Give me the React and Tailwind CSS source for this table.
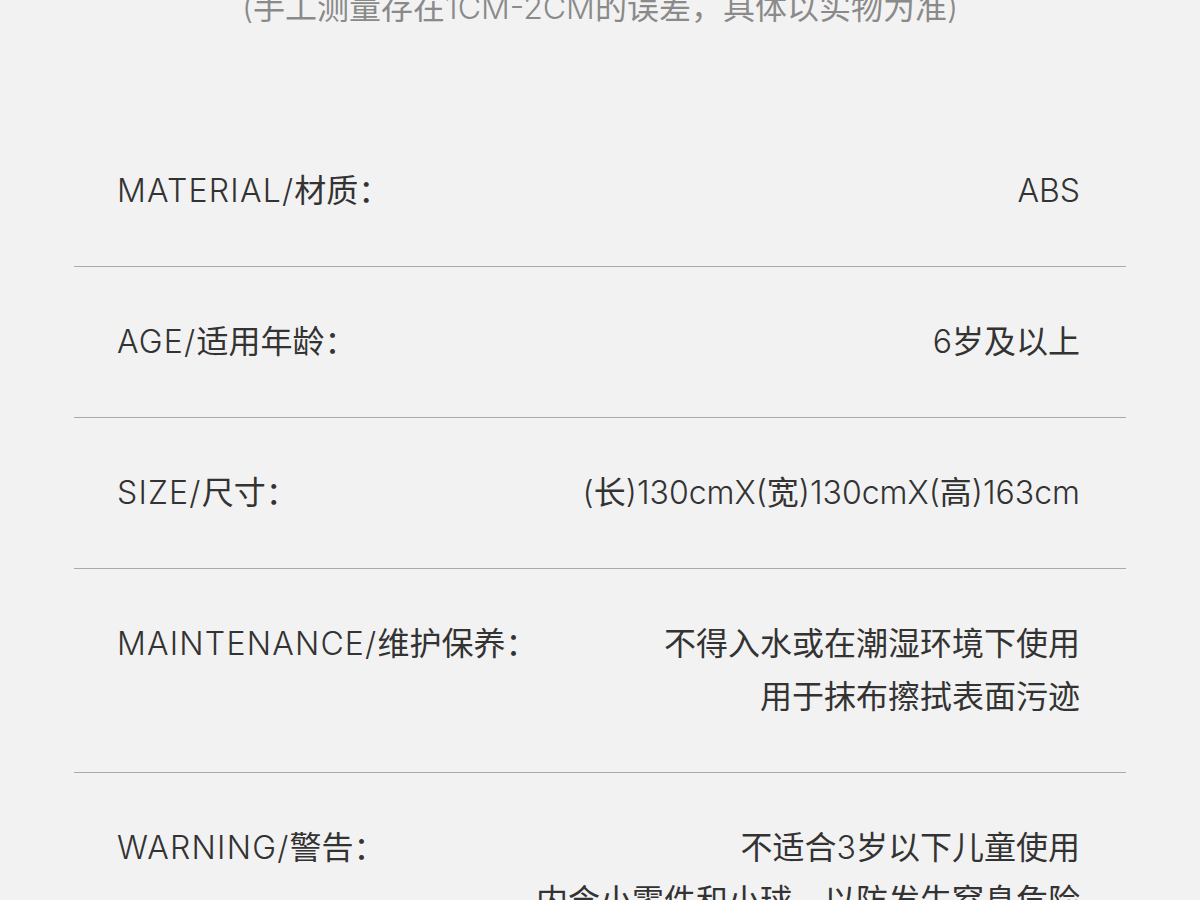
function Mixed({ text, latinClass }) {
  const parts = text.split(/([A-Za-z0-9()\/\-.]+)/).filter((p) => p !== "");
  return (
    <>
      {parts.map((p, i) =>
        /^[A-Za-z0-9()\/\-.]+$/.test(p) ? (
          <span key={i} className={latinClass}>
            {p}
          </span>
        ) : (
          <span key={i}>{p}</span>
        )
      )}
    </>
  );
}

export default function App() {
  const rows = [
    { label: "MATERIAL/材质：", value: ["ABS"] },
    { label: "AGE/适用年龄：", value: ["6岁及以上"] },
    { label: "SIZE/尺寸：", value: ["(长)130cmX(宽)130cmX(高)163cm"] },
    { label: "MAINTENANCE/维护保养：", value: ["不得入水或在潮湿环境下使用", "用于抹布擦拭表面污迹"] },
    { label: "WARNING/警告：", value: ["不适合3岁以下儿童使用", "内含小零件和小球，以防发生窒息危险"] },
  ];
  return (
    <div
      className="w-full h-[900px] overflow-hidden bg-[#f2f2f2] text-[#333333]"
      style={{ fontFamily: 'Inter, "Noto Sans CJK SC", sans-serif' }}
    >
      <div className="mt-[-19px] text-center text-[32px] leading-[54px] text-[#8a8a8a]">
        <Mixed text="(手工测量存在1CM-2CM的误差，具体以实物为准)" latinClass="font-light" />
      </div>
      <div className="mx-[74px] mt-[81px]">
        {rows.map((r, i) => (
          <div
            key={i}
            className={`flex items-start justify-between pl-[43px] pr-[46px] pt-[48px] pb-[49px] text-[32px] leading-[53px] ${i < rows.length - 1 ? "border-b border-[#aaaaaa]" : ""}`}
          >
            <div className="whitespace-nowrap">
              <Mixed text={r.label} latinClass="font-light tracking-[1.2px]" />
            </div>
            <div className="text-right whitespace-nowrap">
              {r.value.map((v, j) => (
                <div key={j}>
                  <Mixed text={v} latinClass="font-light tracking-[0px]" />
                </div>
              ))}
            </div>
          </div>
        ))}
      </div>
    </div>
  );
}
